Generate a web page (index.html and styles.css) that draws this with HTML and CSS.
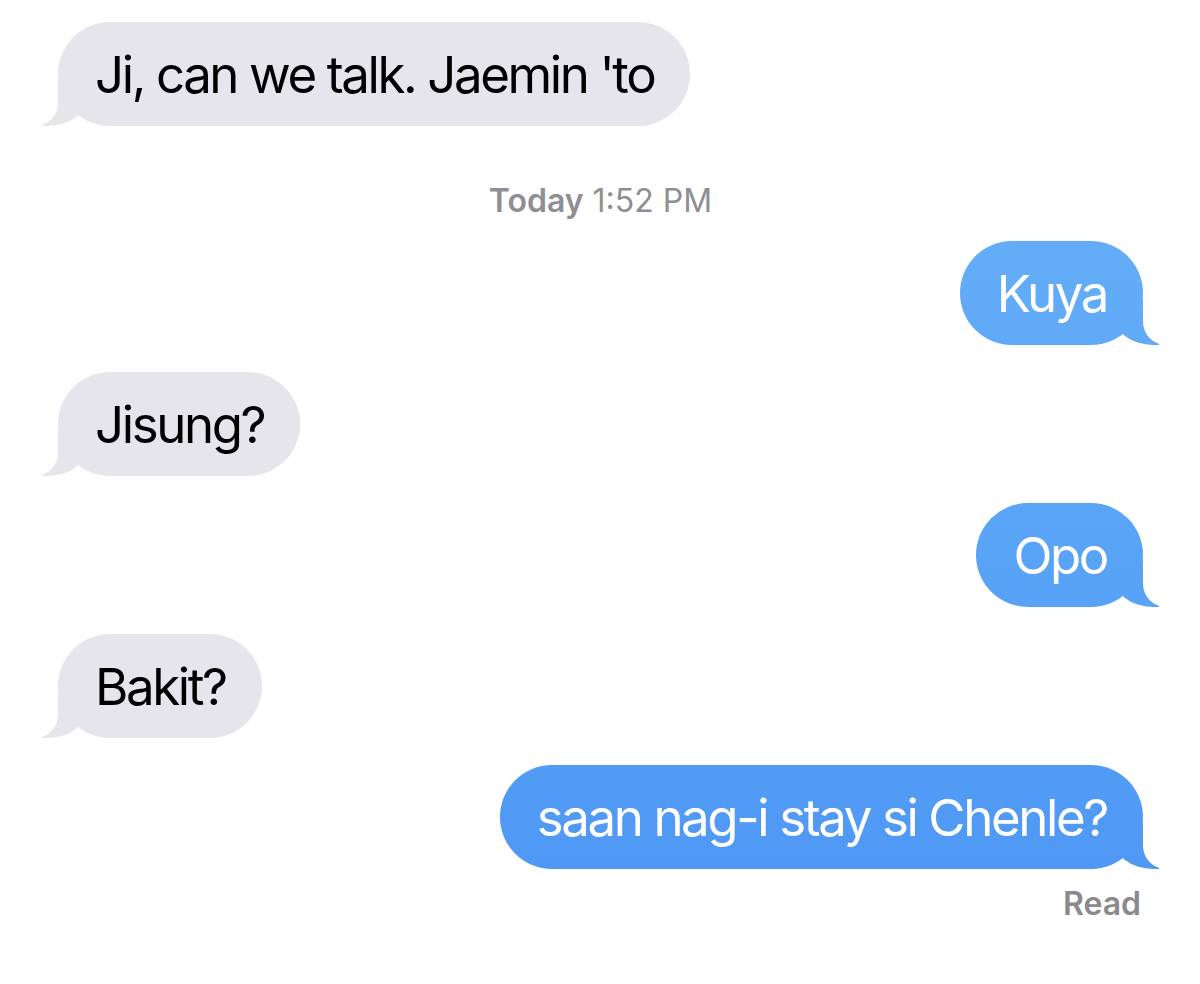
FILE: index.html
```html
<!DOCTYPE html>
<html lang="en">
  <head>
    <meta charset="UTF-8" />
    <title>messages</title>
    <link rel="stylesheet" href="styles.css">
  </head>
  <body>
    <div class="thread">
      <div class="row in"><div class="bubble">Ji, can we talk. Jaemin 'to</div></div>

      <p class="stamp"><b>Today</b> 1:52 PM</p>

      <div class="row out"><div class="bubble">Kuya</div></div>
      <div class="row in"><div class="bubble">Jisung?</div></div>
      <div class="row out"><div class="bubble">Opo</div></div>
      <div class="row in"><div class="bubble">Bakit?</div></div>
      <div class="row out"><div class="bubble">saan nag-i stay si Chenle?</div></div>

      <p class="receipt">Read</p>
    </div>
  </body>
</html>
```

FILE: styles.css
```css
:root {
  --gray: #e6e5eb;
  --blue: linear-gradient(180deg, #6ab4f9 0px, #5ba5f7 500px, #4b94f4 984px);
}

body {
  margin: 0;
  background: #fff;
  font-family: Inter, "Noto Sans", "Liberation Sans", sans-serif;
}

.thread {
  padding: 22px 57px 0 58px;
  display: flex;
  flex-direction: column;
  gap: 27px;
}

.row {
  display: flex;
}
.row.out {
  justify-content: flex-end;
}

.bubble {
  position: relative;
  font-size: 51px;
  line-height: 61px;
  letter-spacing: -2.4px;
  padding: 22px 36px 21px 37px;
  border-radius: 52px;
}

.in .bubble {
  background: var(--gray);
  color: #000;
}
.out .bubble {
  background: var(--blue);
  background-attachment: fixed;
  color: #fff;
}

/* tails: a coloured box with a rounded corner, trimmed by a white one */
.bubble::before,
.bubble::after {
  content: "";
  position: absolute;
  bottom: 0;
  height: 46px;
}
.in .bubble::before {
  left: -16px;
  width: 46px;
  background: var(--gray);
  border-bottom-right-radius: 40px 32px;
}
.in .bubble::after {
  left: -29px;
  width: 29px;
  background: #fff;
  border-bottom-right-radius: 23px;
}
.out .bubble::before {
  right: -16px;
  width: 46px;
  background: var(--blue);
  background-attachment: fixed;
  border-bottom-left-radius: 40px 32px;
}
.out .bubble::after {
  right: -29px;
  width: 29px;
  background: #fff;
  border-bottom-left-radius: 23px;
}

.stamp {
  margin: 31px 0 -4px;
  text-align: center;
  font-size: 32px;
  line-height: 34px;
  color: #8e8e93;
}
.stamp b {
  font-weight: 600;
}

.receipt {
  margin: -12px 2px 0 0;
  text-align: right;
  font-size: 32px;
  line-height: 40px;
  font-weight: 600;
  color: #8a8a8e;
}
```
